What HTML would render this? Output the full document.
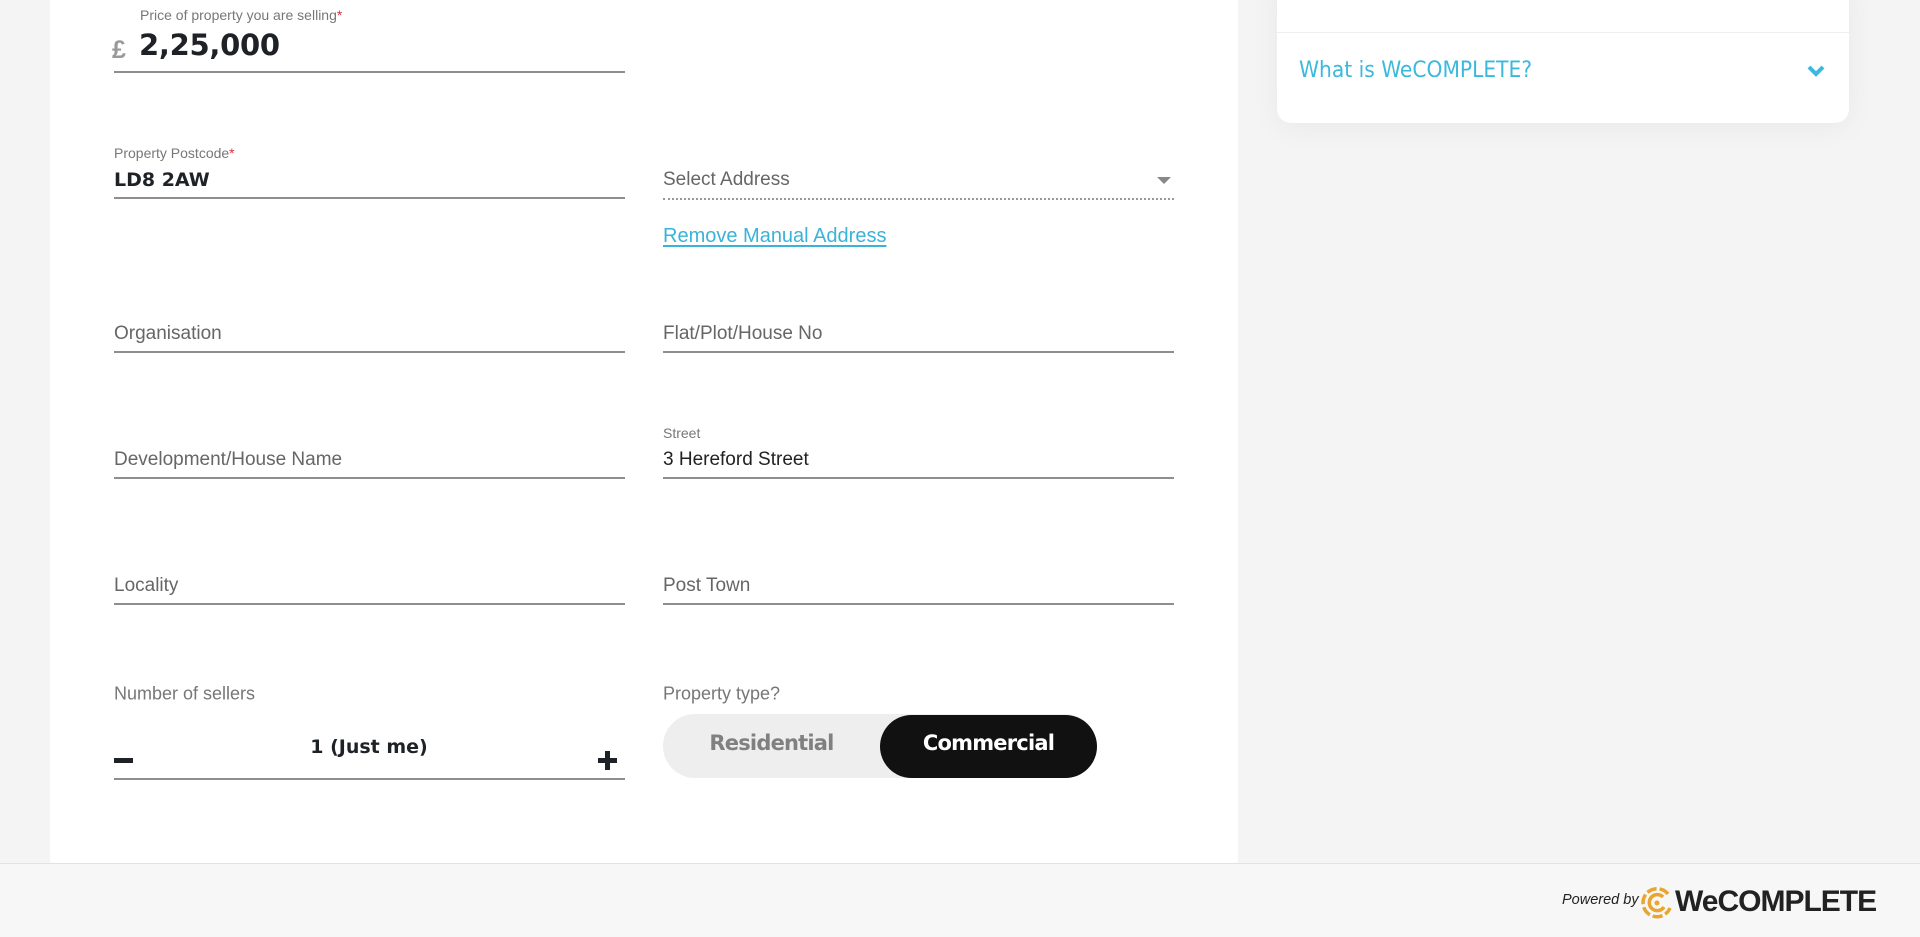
<!DOCTYPE html>
<html><head><meta charset="utf-8"><style>
*{margin:0;padding:0;box-sizing:border-box}
body{width:1920px;height:937px;overflow:hidden;background:#f4f4f4;font-family:"Liberation Sans",Arial,sans-serif;position:relative}
.card{position:absolute;left:50px;top:0;width:1188px;height:863px;background:#fff}
.abs{position:absolute}
.lbl{position:absolute;font-size:14px;color:#777;white-space:nowrap}
.lbl i{color:#d0333f;font-style:normal}
.ph{position:absolute;font-size:19px;color:#666;white-space:nowrap;transform:translateY(-50%)}
.val{position:absolute;font-size:19px;color:#222;white-space:nowrap;transform:translateY(-50%)}
.bv{font-family:"DejaVu Sans","Liberation Sans",sans-serif;font-weight:bold;color:#1e2126}
.ul{position:absolute;height:2px;background:#8e8e8e;width:511px}
.c1{left:114px}.c2{left:663px}
.panel{position:absolute;left:1277px;top:-20px;width:572px;height:143px;background:#fff;border-radius:0 0 14px 14px;box-shadow:0 4px 30px rgba(0,0,0,0.05)}
.footer{position:absolute;left:0;top:863px;width:1920px;height:74px;background:#f7f7f7;border-top:1px solid #e2e2e2}
</style></head><body>
<div class="card"></div>
<div class="panel"><div style="position:absolute;left:0;right:0;top:52px;height:1px;background:#eee"></div></div>
<div class="abs" style="left:1299px;top:57px;font-size:22.5px;color:#3bb9dc;font-family:'DejaVu Sans Condensed','Liberation Sans',sans-serif">What is WeCOMPLETE?</div>
<svg class="abs" style="left:1806px;top:64px" width="20" height="14" viewBox="0 0 20 14"><path d="M3 3 L10 10 L17 3" stroke="#3bb9dc" stroke-width="4" fill="none"/></svg>

<div class="lbl" style="left:140px;top:7px">Price of property you are selling<i>*</i></div>
<div class="abs" style="left:112px;top:36px;font-size:25px;color:#999;font-weight:bold">£</div>
<div class="abs bv" style="left:139px;top:28px;font-size:29px;letter-spacing:-0.3px">2,25,000</div>
<div class="ul c1" style="top:71px"></div>

<div class="lbl c1" style="top:145px">Property Postcode<i>*</i></div>
<div class="val c1 bv" style="top:180px;font-size:19px">LD8 2AW</div>
<div class="ul c1" style="top:197px"></div>

<div class="ph c2" style="top:180px">Select Address</div>
<svg class="abs" style="left:1157px;top:177px" width="14" height="8"><path d="M0 0H14L7 7Z" fill="#888"/></svg>
<div class="abs c2" style="top:198px;width:511px;border-top:2px dotted #999"></div>
<div class="abs c2" style="top:225px;font-size:20px;color:#3bb3d8;text-decoration:underline;text-underline-offset:3px">Remove Manual Address</div>

<div class="ph c1" style="top:334px">Organisation</div><div class="ul c1" style="top:351px"></div>
<div class="ph c2" style="top:334px">Flat/Plot/House No</div><div class="ul c2" style="top:351px"></div>

<div class="ph c1" style="top:460px">Development/House Name</div><div class="ul c1" style="top:477px"></div>
<div class="lbl c2" style="top:425px">Street</div>
<div class="val c2" style="top:460px">3 Hereford Street</div><div class="ul c2" style="top:477px"></div>

<div class="ph c1" style="top:586px">Locality</div><div class="ul c1" style="top:603px"></div>
<div class="ph c2" style="top:586px">Post Town</div><div class="ul c2" style="top:603px"></div>

<div class="ph c1" style="top:694px;font-size:18px;color:#777">Number of sellers</div>
<div class="ph c2" style="top:694px;font-size:18px;color:#777">Property type?</div>
<div class="abs" style="left:114px;top:758px;width:19px;height:5px;background:#1e2126"></div>
<div class="val bv" style="left:369px;top:747px;transform:translate(-50%,-50%)">1 (Just me)</div>
<div class="abs" style="left:598px;top:758px;width:19px;height:5px;background:#1e2126"></div>
<div class="abs" style="left:605px;top:751px;width:5px;height:19px;background:#1e2126"></div>
<div class="ul c1" style="top:778px"></div>

<div class="abs" style="left:663px;top:714px;width:434px;height:64px;border-radius:32px;background:#eee"></div>
<div class="abs" style="left:880px;top:715px;width:217px;height:63px;border-radius:32px;background:#111"></div>
<div class="abs" style="left:663px;top:731px;width:217px;text-align:center;font-size:21px;font-weight:900;color:#808080;font-family:'DejaVu Sans','Liberation Sans',sans-serif;letter-spacing:-0.8px">Residential</div>
<div class="abs" style="left:880px;top:731px;width:217px;text-align:center;font-size:21px;font-weight:900;color:#fff;font-family:'DejaVu Sans','Liberation Sans',sans-serif;letter-spacing:-0.8px">Commercial</div>

<div class="footer"></div>
<div class="abs" style="left:1562px;top:892px;font-size:14.5px;font-style:italic;color:#222">Powered by</div>
<svg class="abs" style="left:1640px;top:886px" width="34" height="34" viewBox="0 0 34 34" fill="none" stroke="#e9a531" stroke-width="3.5">
<path d="M28 8 A14 14 0 1 0 30 22" stroke-dasharray="10 3"/><path d="M23 11 A8 8 0 1 0 24 21"/><circle cx="17" cy="17" r="2.5" fill="#e9a531" stroke="none"/></svg>
<div class="abs" style="left:1675px;top:885px;font-size:30px;font-weight:bold;color:#222;letter-spacing:-1px">WeCOMPLETE</div>
</body></html>
